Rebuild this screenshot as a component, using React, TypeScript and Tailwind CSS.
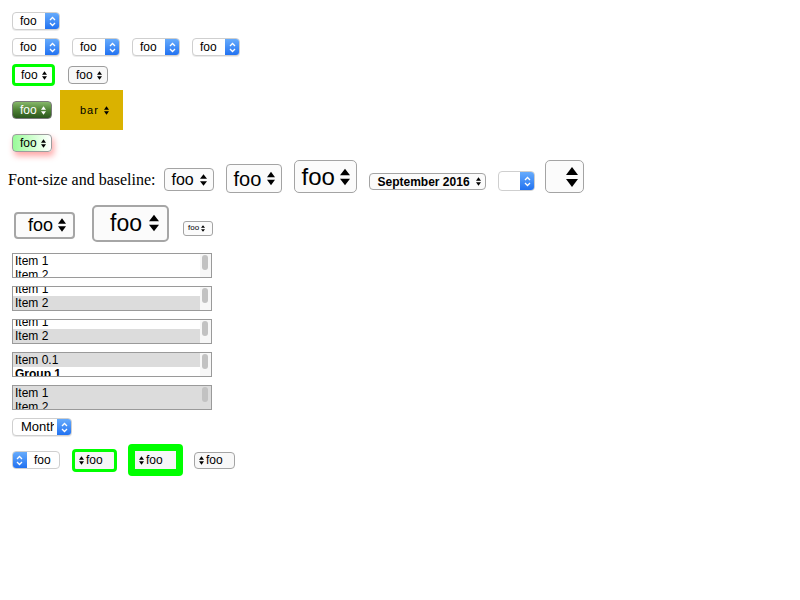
import React from 'react';

// small black up/down arrows used by the native-looking menus
const UpDown = ({ w = 6, h = 10, color = '#000' }: { w?: number; h?: number; color?: string }) => (
  <svg width={w} height={h} viewBox="0 0 6 10" className="shrink-0">
    <path d="M3 0L6 4H0Z M3 10L0 6H6Z" fill={color} />
  </svg>
);

// white chevrons on the blue aqua cap
const Chevrons = () => (
  <svg width="7" height="11" viewBox="0 0 7 11" fill="none" stroke="white" strokeWidth="1.3" className="shrink-0">
    <path d="M1 4L3.5 1.5L6 4M1 7L3.5 9.5L6 7" />
  </svg>
);

const BlueCap = ({ className = '' }: { className?: string }) => (
  <span className={`flex w-[15px] shrink-0 items-center justify-center bg-gradient-to-b from-[#6aaefc] to-[#1c6ef0] ${className}`}>
    <Chevrons />
  </span>
);

const AquaSelect = ({ label = 'foo', className = 'w-[48px]', textClass = 'pl-[7px] text-[12px]' }: { label?: string; className?: string; textClass?: string }) => (
  <div className={`flex h-[18px] overflow-hidden rounded-[4px] border border-[#cfcfcf] bg-white shadow-[0_1px_0_rgba(0,0,0,0.08)] ${className}`}>
    <span className={`flex-1 overflow-hidden whitespace-nowrap leading-[16px] text-black ${textClass}`}>{label}</span>
    <BlueCap className="-my-px -mr-px" />
  </div>
);

const Listbox = ({ children, shift = 0, allSelected = false }: { children: React.ReactNode; shift?: number; allSelected?: boolean }) => (
  <div className={`flex h-[25px] w-[200px] overflow-hidden border border-[#9a9a9a] ${allSelected ? 'bg-[#dcdcdc]' : 'bg-white'}`}>
    <div className="flex-1 overflow-hidden">
      <div className={shift ? '-mt-[5px]' : ''}>{children}</div>
    </div>
    <div className={`w-[11px] shrink-0 pt-[1px] pl-[2px] ${allSelected ? 'bg-[#dcdcdc]' : 'bg-[#f7f7f7]'}`}>
      <div className="h-[15px] w-[6px] rounded-[3px] bg-[#c2c2c2]" />
    </div>
  </div>
);

const Opt = ({ children, sel = false, bold = false }: { children: React.ReactNode; sel?: boolean; bold?: boolean }) => (
  <div className={`h-[14px] pl-[2px] text-[12px] leading-[14px] text-black ${sel ? 'bg-[#dcdcdc]' : ''} ${bold ? 'font-bold' : ''}`}>{children}</div>
);

export default function App() {
  return (
    <div className="h-[600px] w-[800px] bg-white pl-[12px] font-['Liberation_Sans',Arial,sans-serif] text-black">
      {/* row 1 */}
      <div className="flex pt-[12px]">
        <AquaSelect />
      </div>

      {/* row 2 */}
      <div className="mt-[8px] flex gap-[12px]">
        <AquaSelect />
        <AquaSelect />
        <AquaSelect />
        <AquaSelect />
      </div>

      {/* row 3 */}
      <div className="mt-[8px] flex h-[22px] items-center gap-[13px]">
        <div className="flex h-[22px] w-[43px] items-center gap-[4px] rounded-[4px] border-[3px] border-[#00ff00] bg-white pl-[6px] text-[12px]">
          foo <UpDown w={5} h={9} />
        </div>
        <div className="flex h-[18px] w-[40px] items-center gap-[4px] rounded-[4px] border border-[#9d9d9d] bg-[#f8f8f8] pl-[7px] text-[12px]">
          foo <UpDown w={5} h={9} />
        </div>
      </div>

      {/* row 4 */}
      <div className="mt-[4px] flex h-[40px] items-center gap-[8px]">
        <div className="flex h-[18px] w-[40px] items-center gap-[4px] rounded-[4px] border border-[#7a7a7a] bg-gradient-to-b from-[#86b86a] via-[#4f8236] to-[#2b571d] pl-[7px] text-[12px] text-white">
          foo <UpDown w={5} h={9} color="#fff" />
        </div>
        <div className="flex h-[40px] w-[63px] items-center gap-[5px] bg-[#dab200] pl-[20px] text-[11px] tracking-[1px]">
          bar <UpDown w={5} h={9} />
        </div>
      </div>

      {/* row 5 */}
      <div className="mt-[4px] flex">
        <div className="flex h-[18px] w-[40px] items-center gap-[4px] rounded-[4px] border border-[#9d9d9d] bg-gradient-to-r from-[#98fb98] to-white pl-[7px] text-[12px] shadow-[2px_4px_6px_rgba(255,0,0,0.35)]">
          foo <UpDown w={5} h={9} />
        </div>
      </div>

      {/* row 6 : font sizes */}
      <div className="-ml-[4px] mt-[8px] flex h-[33px] items-start">
        <span className="mt-[11px] font-['Liberation_Serif','Times_New_Roman',serif] text-[16px] leading-[18px]">Font-size and baseline:</span>
        <div className="ml-[8px] mt-[8px] flex h-[23px] w-[50px] items-center gap-[6px] rounded-[4px] border border-[#a4a4a4] bg-[#fbfbfb] pl-[7px] text-[16px]">
          foo <UpDown w={7} h={12} />
        </div>
        <div className="ml-[12px] mt-[4px] flex h-[29px] w-[56px] items-center gap-[6px] rounded-[4px] border border-[#a4a4a4] bg-[#fbfbfb] pl-[7px] text-[20px]">
          foo <UpDown w={8} h={15} />
        </div>
        <div className="ml-[12px] flex h-[33px] w-[63px] items-center gap-[5px] rounded-[5px] border border-[#a4a4a4] bg-[#fbfbfb] pl-[7px] text-[24px]">
          foo <UpDown w={10} h={18} />
        </div>
        <div className="ml-[12px] mt-[13px] flex h-[17px] w-[117px] items-center gap-[6px] rounded-[4px] border border-[#a4a4a4] bg-[#fbfbfb] pl-[8px] text-[12px] font-bold">
          September 2016 <UpDown w={5} h={9} />
        </div>
        <div className="ml-[12px] mt-[11px] flex h-[20px] w-[37px] overflow-hidden rounded-[4px] border border-[#cfcfcf] bg-white">
          <span className="flex-1" />
          <BlueCap className="-my-px -mr-px" />
        </div>
        <div className="ml-[10px] flex h-[33px] w-[39px] items-center justify-end rounded-[5px] border border-[#a4a4a4] bg-[#fbfbfb] pr-[5px]">
          <UpDown w={12} h={22} />
        </div>
      </div>

      {/* row 7 */}
      <div className="mt-[12px] flex h-[36px] items-center">
        <div className="ml-[2px] mt-[4px] flex h-[27px] w-[61px] items-center gap-[5px] rounded-[4px] border-2 border-[#a6a6a6] bg-[#fbfbfb] pl-[12px] text-[18px]">
          foo <UpDown w={8} h={14} />
        </div>
        <div className="ml-[17px] flex h-[37px] w-[77px] items-center gap-[7px] rounded-[5px] border-2 border-[#a6a6a6] bg-[#fbfbfb] pl-[16px] text-[23px]">
          foo <UpDown w={10} h={18} />
        </div>
        <div className="ml-[14px] mt-[10px] flex h-[15px] w-[30px] items-center gap-[2px] rounded-[3px] border border-[#a4a4a4] bg-[#fbfbfb] pl-[4px] text-[8px]">
          foo <UpDown w={4} h={7} />
        </div>
      </div>

      {/* list boxes */}
      <div className="mt-[12px] flex flex-col gap-[8px]">
        <Listbox>
          <Opt>Item 1</Opt>
          <Opt>Item 2</Opt>
        </Listbox>
        <Listbox shift={5}>
          <Opt>Item 1</Opt>
          <Opt sel>Item 2</Opt>
        </Listbox>
        <Listbox shift={5}>
          <Opt>Item 1</Opt>
          <Opt sel>Item 2</Opt>
        </Listbox>
        <Listbox>
          <Opt sel>Item 0.1</Opt>
          <Opt bold>Group 1</Opt>
        </Listbox>
        <Listbox allSelected>
          <Opt>Item 1</Opt>
          <Opt>Item 2</Opt>
        </Listbox>
      </div>

      {/* month */}
      <div className="mt-[8px] flex">
        <AquaSelect label="Month" className="w-[60px]" textClass="mr-[3px] pl-[8px] text-[13px]" />
      </div>

      {/* last row: arrows on the left */}
      <div className="mt-[8px] flex h-[32px] items-center gap-[11px]">
        <div className="flex h-[18px] w-[48px] overflow-hidden rounded-[4px] border border-[#cfcfcf] bg-white">
          <BlueCap className="-my-px -ml-px" />
          <span className="pl-[7px] text-[12px] leading-[16px]">foo</span>
        </div>
        <div className="ml-[1px] flex h-[23px] w-[45px] items-center gap-[2px] rounded-[4px] border-[3px] border-[#00ff00] bg-[#f6f6f6] pl-[4px] text-[12px]">
          <UpDown w={5} h={9} /> foo
        </div>
        <div className="flex h-[32px] w-[55px] items-center gap-[2px] rounded-[4px] border-[7px] border-[#00ff00] bg-[#f6f6f6] pl-[4px] text-[12px]">
          <UpDown w={5} h={9} /> foo
        </div>
        <div className="flex h-[17px] w-[41px] items-center gap-[2px] rounded-[4px] border border-[#a4a4a4] bg-[#f8f8f8] pl-[4px] text-[12px]">
          <UpDown w={5} h={9} /> foo
        </div>
      </div>
    </div>
  );
}
